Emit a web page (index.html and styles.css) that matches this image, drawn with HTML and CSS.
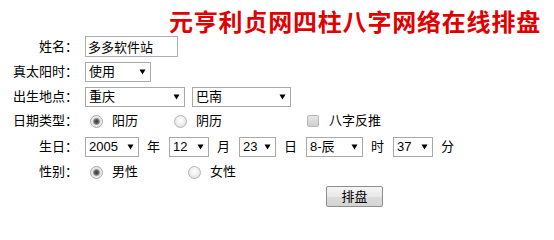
FILE: index.html
```html
<!DOCTYPE html>
<html lang="zh-CN">
<head>
<meta charset="utf-8">
<title>元亨利贞网四柱八字网络在线排盘</title>
<link rel="stylesheet" href="styles.css">
</head>
<body>
<form class="paipan">
  <h1 class="title">元亨利贞网四柱八字网络在线排盘</h1>

  <div class="row">
    <label class="lbl">姓名：</label>
    <div class="field"><input class="txt" type="text" value="多多软件站"></div>
  </div>

  <div class="row">
    <label class="lbl">真太阳时：</label>
    <div class="field">
      <span class="sel w66"><select><option>使用</option></select><span class="caret"><svg width="7" height="6" viewBox="0 0 7 6"><polygon points="0.5,0.5 6.5,0.5 3.5,5.5" fill="#000"/></svg></span></span>
    </div>
  </div>

  <div class="row">
    <label class="lbl">出生地点：</label>
    <div class="field gap7">
      <span class="sel w100"><select><option>重庆</option></select><span class="caret"><svg width="7" height="6" viewBox="0 0 7 6"><polygon points="0.5,0.5 6.5,0.5 3.5,5.5" fill="#000"/></svg></span></span>
      <span class="sel w99"><select><option>巴南</option></select><span class="caret"><svg width="7" height="6" viewBox="0 0 7 6"><polygon points="0.5,0.5 6.5,0.5 3.5,5.5" fill="#000"/></svg></span></span>
    </div>
  </div>

  <div class="row row-short">
    <label class="lbl">日期类型：</label>
    <div class="field">
      <label class="opt ow84"><input type="radio" name="dt" checked><span>阳历</span></label>
      <label class="opt ow133"><input type="radio" name="dt"><span>阴历</span></label>
      <label class="opt opt-cb"><input type="checkbox"><span>八字反推</span></label>
    </div>
  </div>

  <div class="row row-tall">
    <label class="lbl">生日：</label>
    <div class="field gap8">
      <span class="sel w54"><select><option>2005</option></select><span class="caret"><svg width="7" height="6" viewBox="0 0 7 6"><polygon points="0.5,0.5 6.5,0.5 3.5,5.5" fill="#000"/></svg></span></span>
      <span class="unit">年</span>
      <span class="sel w40"><select><option>12</option></select><span class="caret"><svg width="7" height="6" viewBox="0 0 7 6"><polygon points="0.5,0.5 6.5,0.5 3.5,5.5" fill="#000"/></svg></span></span>
      <span class="unit">月</span>
      <span class="sel w37"><select><option>23</option></select><span class="caret"><svg width="7" height="6" viewBox="0 0 7 6"><polygon points="0.5,0.5 6.5,0.5 3.5,5.5" fill="#000"/></svg></span></span>
      <span class="unit">日</span>
      <span class="sel w57"><select><option>8-辰</option></select><span class="caret"><svg width="7" height="6" viewBox="0 0 7 6"><polygon points="0.5,0.5 6.5,0.5 3.5,5.5" fill="#000"/></svg></span></span>
      <span class="unit">时</span>
      <span class="sel w40"><select><option>37</option></select><span class="caret"><svg width="7" height="6" viewBox="0 0 7 6"><polygon points="0.5,0.5 6.5,0.5 3.5,5.5" fill="#000"/></svg></span></span>
      <span class="unit">分</span>
    </div>
  </div>

  <div class="row row-short">
    <label class="lbl">性别：</label>
    <div class="field">
      <label class="opt ow98"><input type="radio" name="sex" checked><span>男性</span></label>
      <label class="opt"><input type="radio" name="sex"><span>女性</span></label>
    </div>
  </div>

  <div class="row">
    <div class="field submit">
      <button class="btn" type="button">排盘</button>
    </div>
  </div>
</form>
</body>
</html>
```

FILE: styles.css
```css
* {
  box-sizing: border-box;
}

body {
  margin: 8px;
  background: #fff;
  color: #000;
  font-family: "Liberation Sans", "Noto Sans CJK SC", sans-serif;
  font-size: 13px;
}

.paipan {
  margin: 0;
}

.title {
  margin: 0;
  height: 26px;
  line-height: 26px;
  padding-right: 5px;
  text-align: right;
  font-family: "Noto Sans CJK SC", serif;
  font-size: 24px;
  font-weight: 700;
  letter-spacing: 0.8px;
  color: #e00000;
}

.row {
  display: flex;
  align-items: center;
  height: 25px;
}

.row-short {
  height: 24px;
}

.row-tall {
  height: 27px;
}

.lbl {
  flex: none;
  width: 70px;
  text-align: right;
  line-height: 16px;
  white-space: nowrap;
}

.field {
  display: flex;
  align-items: center;
  margin-left: 7px;
  line-height: 16px;
}

.gap7 {
  gap: 7px;
}

.gap8 {
  gap: 8px;
}

.unit {
  width: 13px;
  margin-right: 1px;
  text-align: center;
}

.txt {
  width: 93px;
  height: 21px;
  margin: 0;
  padding: 0 2px;
  border: 1px solid #abadb3;
  font: inherit;
  color: #000;
  background: #fff;
  outline: none;
}

.sel {
  display: inline-flex;
  align-items: center;
  height: 20px;
  border: 1px solid #a9a9a9;
  background: #fff;
}

.sel select {
  flex: 1;
  min-width: 0;
  height: 18px;
  margin: 0;
  padding: 0 0 0 3px;
  border: none;
  background: transparent;
  font: inherit;
  color: #000;
  appearance: none;
  -webkit-appearance: none;
  outline: none;
}

.caret {
  flex: none;
  display: flex;
  align-items: center;
  justify-content: center;
  width: 16px;
  height: 18px;
}

.w37 { width: 37px; }
.w40 { width: 40px; }
.w54 { width: 54px; }
.w57 { width: 57px; }
.w66 { width: 66px; }
.w99 { width: 99px; }
.w100 { width: 100px; }

.opt {
  display: flex;
  align-items: center;
  flex: none;
}

.ow84 { width: 84px; }
.ow98 { width: 98px; }
.ow133 { width: 133px; }

.opt input {
  flex: none;
  width: 13px;
  height: 13px;
  margin: 0 9px 0 5px;
  appearance: none;
  -webkit-appearance: none;
  border: 1px solid #b4b4b4;
  background: radial-gradient(circle at 50% 40%, #ffffff 0, #f0f0f0 45%, #d6d6d6 100%);
}

.opt input[type="radio"] {
  border-radius: 50%;
}

.opt input[type="radio"]:checked {
  border-color: #a8a8a8;
  background: radial-gradient(circle, #3c3c3c 0, #5a5a5a 2px, #9a9a9a 3px, #e6e6e6 4px, #f6f6f6 100%);
}

.opt-cb input {
  width: 12px;
  height: 12px;
  margin-right: 10px;
  border-radius: 2px;
  border-color: #b8b8b8;
  background: linear-gradient(#e6e6e6, #cfcfcf);
}

.submit {
  margin-left: 318px;
}

.btn {
  width: 57px;
  height: 21px;
  margin: 0;
  padding: 0;
  border: 1px solid #8e8e8e;
  border-radius: 2px;
  background: linear-gradient(#f6f6f6, #e8e8e8 50%, #dcdcdc 51%, #d4d4d4);
  font: inherit;
  color: #000;
}
```
